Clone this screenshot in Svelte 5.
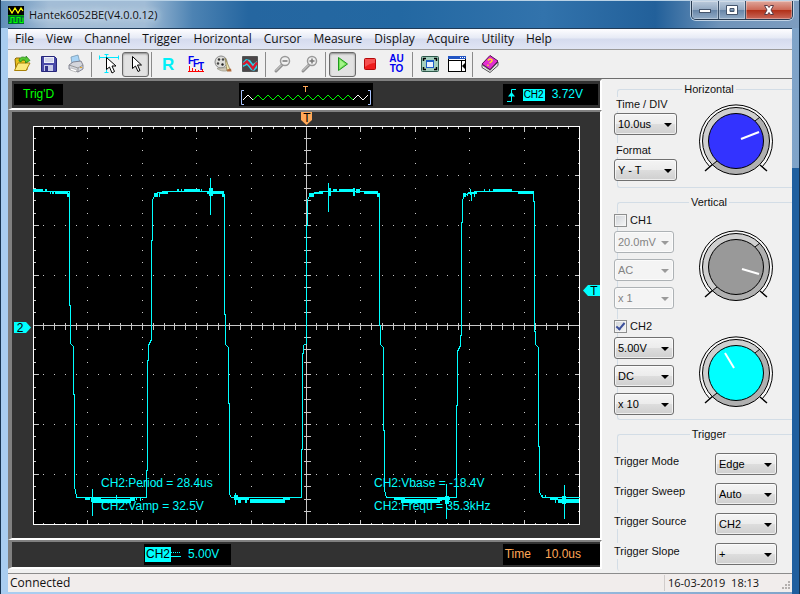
<script>
  // App.svelte — Hantek6052BE oscilloscope front panel

  // plot area is 10 x 8 divisions, origin at its top-left corner
  const W = 546;
  const H = 398;
  const DIV_X = W / 10;
  const DIV_Y = H / 8;
  const range = (n) => Array.from({ length: n }, (_, i) => i);

  // dotted graticule
  let dots = '';
  for (const c of range(9)) {
    for (const r of range(31)) {
      dots += `M${Math.floor((c + 1) * DIV_X)} ${Math.floor(((r + 1) * DIV_Y) / 4)}h1`;
    }
  }
  for (const r of range(7)) {
    for (const c of range(49)) {
      dots += `M${Math.floor(((c + 1) * DIV_X) / 5)} ${Math.floor((r + 1) * DIV_Y)}h1`;
    }
  }

  // ticks on the edges and on both centre axes
  let ticks = '';
  for (const i of range(49)) {
    const x = Math.floor(((i + 1) * DIV_X) / 5);
    const len = (i + 1) % 5 === 0 ? 5 : 2;
    ticks += `M${x} 0v${len}M${x} ${H}v${-len}M${x} 196v7`;
  }
  for (const i of range(31)) {
    const y = Math.floor(((i + 1) * DIV_Y) / 4);
    const len = (i + 1) % 4 === 0 ? 5 : 2;
    ticks += `M0 ${y}h${len}M${W} ${y}h${-len}M270 ${y}h7`;
  }

  const trace =
    'M0 65H36V179H37V217L40 220V268H41V360L43 370V371H113V344H114V234H115V219L118 213V114H119V74L121 69' +
    'L124 66L134 65H190L191 70V188H192V218L195 221V277H196V368L198 371H268V323H269V227H270V219L273 217V99H274V74' +
    'L276 69L282 66L290 65H344L346 70V199H347V218L350 221V304H351V364L353 371H423V279H424V225L427 219V209H428V96' +
    'H429V74L431 69L436 66L446 65H500V75H501V205H502V218L505 221V320H506V366L509 371H546';

  // noisy stretches: [x, y, width, height]
  const noise = [
    [0, 63, 10, 3], [12, 63, 2, 2], [17, 66, 1, 2], [19, 66, 2, 2], [22, 66, 13, 2], [34, 67, 3, 4],
    [121, 67, 4, 4], [126, 67, 1, 4], [127, 66, 8, 2], [144, 63, 2, 2], [148, 63, 1, 2], [151, 63, 16, 3],
    [168, 63, 1, 2], [174, 66, 16, 2], [176, 62, 4, 8], [189, 67, 2, 4],
    [52, 372, 5, 2], [58, 372, 10, 4], [60, 373, 38, 4], [97, 372, 5, 3], [103, 372, 1, 2], [107, 372, 1, 3],
    [201, 369, 4, 5], [205, 371, 3, 6], [208, 372, 8, 2], [212, 373, 2, 4], [217, 373, 35, 4], [250, 372, 7, 2],
    [276, 67, 5, 4], [282, 66, 8, 2], [295, 62, 3, 8], [300, 63, 4, 2], [306, 63, 16, 3], [320, 62, 2, 8],
    [323, 63, 4, 4], [331, 66, 13, 2], [344, 67, 3, 4],
    [361, 372, 10, 2], [368, 372, 4, 5], [371, 373, 36, 4], [404, 372, 5, 3], [407, 371, 10, 3], [412, 370, 4, 8],
    [430, 67, 3, 4], [434, 67, 1, 3], [436, 66, 8, 2], [441, 66, 1, 5], [451, 63, 1, 2], [456, 63, 1, 2],
    [460, 63, 19, 3], [485, 65, 15, 3],
    [509, 369, 1, 3], [512, 369, 1, 3], [517, 372, 8, 2], [522, 372, 1, 5], [525, 373, 21, 4], [529, 370, 4, 8],
  ];
  const spikes = 'M177 51V88M295 56V85M59 362V389M83 368V373M202 366V378M413 357V392M437 62V68M438 66V74M531 358V392';

  // little zigzag in the record preview
  const zigzag = (from, n) => range(n).map((i) => `${from + i * 5},${i % 2 ? 12 : 17}`).join(' ');

  const menu = ['File', 'View', 'Channel', 'Trigger', 'Horizontal', 'Cursor', 'Measure', 'Display', 'Acquire', 'Utility', 'Help'];

  const groups = [
    [['open', 'Open'], ['save', 'Save'], ['print', 'Print']],
    [['cross', 'Cross cursor'], ['pointer', 'No cursor']],
    [['ref', 'Reference'], ['fft', 'FFT'], ['filter', 'Digital filter'], ['passfail', 'Pass / Fail']],
    [['zoomout', 'Zoom out'], ['zoomin', 'Zoom in']],
    [['start', 'Start'], ['stop', 'Stop'], ['auto', 'Auto set']],
    [['full', 'Full screen'], ['panel', 'Side panel']],
    [['help', 'Help']],
  ];
  let cursorTool = $state('pointer');
  let running = $state(true);

  const isPressed = (id) => id === cursorTool || (id === 'start' && running);

  function press(id) {
    if (id === 'cross' || id === 'pointer') cursorTool = id;
    if (id === 'start') running = true;
    if (id === 'stop') running = false;
  }

  const channels = $state([
    {
      name: 'CH1', on: false, color: '#999999', hand: 'M6 2L23 7',
      fields: [['Volts', '20.0mV'], ['Coupling', 'AC'], ['Probe', 'x 1']],
    },
    {
      name: 'CH2', on: true, color: '#00ffff', hand: 'M-11 -20L-2 -5',
      fields: [['Volts', '5.00V'], ['Coupling', 'DC'], ['Probe', 'x 10']],
    },
  ]);

  const triggerRows = [['Mode', 'Edge'], ['Sweep', 'Auto'], ['Source', 'CH2'], ['Slope', '+']];
</script>

{#snippet combo(id, value, label, disabled)}
  <span class="combo" class:off={disabled}>
    <select {id} aria-label={label} {disabled}><option>{value}</option></select>
  </span>
{/snippet}

{#snippet knob(color, hand)}
  <svg class="knob" viewBox="-38 -38 76 76" aria-hidden="true">
    <path d="M-26 26A36.5 36.5 0 1 1 26 26" fill="#f8f8f8" stroke="#000" />
    <path d="M-31 30L-23 23M31 30L24 24" stroke="#000" stroke-width="1.4" />
    <circle r="33.5" fill="#cfcfcf" />
    <path d="M23.7 -23.7A33.5 33.5 0 0 1 -23.7 23.7Z" fill="#b0b0b0" />
    <circle r="33.5" fill="none" stroke="#000" />
    <path d="M19 -20L24 -24M-19 20L-24 24" stroke="#000" />
    <circle r="27.5" fill={color} stroke="#000" />
    <path d={hand} stroke="#fff" stroke-width="2" />
  </svg>
{/snippet}

{#snippet icon(id)}
  <svg class="icon" viewBox="0 0 20 20" aria-hidden="true">
    {#if id === 'open'}
      <path d="M3 5l1-1h4l1 2h6v10H4z" fill="#e8c11c" stroke="#8d6a06" />
      <path d="M2.5 16.5L6 9h12l-4 7.5z" fill="#fbe97c" stroke="#a98208" />
      <path d="M7 7c0-4 4-5 7-3V2l4 4.5L13.5 9V7c-2-2-4-1-4.5 1z" fill="#56c833" stroke="#1f7d14" stroke-width=".7" />
    {:else if id === 'save'}
      <path d="M2.5 2.5h13l2 2v13h-15z" fill="#4a4aa8" stroke="#26267a" />
      <rect x="5" y="3" width="10" height="6" fill="#eef0fa" />
      <path d="M6 5h8M6 7h8" stroke="#b5bad8" />
      <rect x="5" y="11" width="9" height="6" fill="#c9cce8" />
      <rect x="6" y="12" width="3" height="5" fill="#34348c" />
    {:else if id === 'print'}
      <path d="M5 3l7-2 2 8-8 1z" fill="#a9d4f5" stroke="#6c8fab" stroke-width=".7" />
      <path d="M3 11l4-3 8-1 2 4v4l-5 3-9-3z" fill="#d4d6dc" stroke="#6d7080" stroke-width=".8" />
      <path d="M3 11l9 3 5-3M12 14v4" fill="none" stroke="#888" stroke-width=".8" />
      <path d="M5 14l6 2-1 2-6-2z" fill="#fff" stroke="#999" stroke-width=".5" />
      <rect x="14" y="13" width="2" height="1" fill="#e5a92b" />
    {:else if id === 'cross'}
      <path d="M0 3.5h20M.5 1.5v4M19.5 1.5v4M7.5 0v19M5.5 .5h4M5.5 18.5h4" stroke="#00e8ff" />
      <path d="M7.5 3.5v12l3-2.5 2.5 6 2.5-1.5-2.5-5.5h4z" fill="#fff" stroke="#000" />
    {:else if id === 'pointer'}
      <path d="M6.5 2.5v12l3-2.5 2.5 5.5 2-1-2.5-5.5h4z" fill="#fff" stroke="#000" />
    {:else if id === 'ref'}
      <text class="letter" x="3" y="16">R</text>
    {:else if id === 'fft'}
      <path d="M2 17.5h16M3.5 17v-5M6.5 17v-3M9.5 17v-2M12.5 17v-1M16.5 17v-2" stroke="#f00" />
      <text class="fft" x="2 7 12" y="10 13 16">FFT</text>
    {:else if id === 'filter'}
      <circle cx="8" cy="8" r="6" fill="#dcdcd8" stroke="#888" />
      <circle cx="6" cy="5.5" r="1.2" fill="#333" />
      <circle cx="10" cy="5.5" r="1.2" fill="#444" />
      <circle cx="5" cy="9.5" r="1.2" fill="#444" />
      <circle cx="9.5" cy="10.5" r="1.2" fill="#222" />
      <path d="M4 14.5c4 3 8 3 11 2l-1-3z" fill="#cfc9ba" stroke="#887" stroke-width=".6" />
      <path d="M12 4l4 9 1 3-3 1z" fill="#efe6ae" stroke="#857a4a" stroke-width=".7" />
      <path d="M14 15.5l4-1 .5 3h-4z" fill="#b06a3c" />
    {:else if id === 'passfail'}
      <path d="M2.5 2.5h15v15h-15z" fill="#22d7ee" stroke="#555" />
      <path d="M3 3h14v4l-4 3-3-4-4-1-3 3zM3 17v-4l4-2 4 5 3 1 3-3v3z" fill="#4b4648" />
      <path d="M3 10.500l4-3 3 3 3 4 4-6" fill="none" stroke="#d31a30" stroke-width="2.5" />
    {:else if id === 'zoomout' || id === 'zoomin'}
      <path d="M9 11l-6 6" stroke="#8f8f8f" stroke-width="3" stroke-linecap="round" />
      <path d="M8.5 11l-5.5 5.5" stroke="#ddd" stroke-linecap="round" />
      <circle cx="12" cy="7" r="4.500" fill="#f0f0f0" stroke="#999" stroke-width="1.5" />
      <path d="M9.5 7h5" stroke="#777" stroke-width="1.5" />
      {#if id === 'zoomin'}<path d="M12 4.5v5" stroke="#777" stroke-width="1.5" />{/if}
    {:else if id === 'start'}
      <path d="M5.5 3.5v13L14.5 10z" fill="#74e257" stroke="#1f9a1f" />
      <path d="M7 6v8l5-4z" fill="#a6f48c" />
    {:else if id === 'stop'}
      <rect x="4.5" y="4.5" width="11" height="11" rx="1" fill="#ee1c1c" stroke="#b30808" />
      <path d="M5 5h10v4q-5 0-10 4z" fill="#f65050" />
    {:else if id === 'full'}
      <rect x="1.5" y="2.5" width="17" height="15" rx="1" fill="#a4cfbd" stroke="#2e5a4c" />
      <path d="M3.5 7V4.5H6M14 4.5h2.5V7M16.5 13v2.5H14M6 15.5H3.5V13" fill="none" stroke="#000" stroke-width="1.5" />
      <rect x="6.5" y="6.5" width="7" height="7" fill="#e8f1ff" stroke="#1b5cc7" />
      <rect x="6" y="6" width="8" height="2" fill="#1b5cc7" />
    {:else if id === 'panel'}
      <rect x="1.5" y="2.5" width="17" height="15" fill="#fff" stroke="#000" />
      <rect x="1" y="2" width="18" height="3" fill="#2356c4" />
      <path d="M13 3.5h1M15 3.5h1M17 3.5h1" stroke="#fff" />
      <path d="M1 6.5h18M14.5 6v11" stroke="#000" />
      <path d="M18 9v6l-3-3z" fill="#000" />
    {:else if id === 'help'}
      <path d="M2 10.5l8 5.5 8-8v3.5l-8 7-8-5z" fill="#fff" stroke="#222" stroke-width=".8" />
      <path d="M2 10l8-8.500L18 7l-8 8.500z" fill="#e22fd0" stroke="#5b0d55" />
      <path d="M3 12l7 5 8-7.5" fill="none" stroke="#888" stroke-width=".6" />
      <path d="M8 6.5c2-3 6-.5 3 1.5l-1.5 1M8.5 10.8l-1 .8" fill="none" stroke="#ffe21f" stroke-width="1.5" />
    {/if}
  </svg>
{/snippet}

<div class="window">
  <header class="titlebar">
    <svg class="logo" viewBox="0 0 16 18" aria-hidden="true">
      <rect width="16" height="18" fill="#000" />
      <rect y="9" width="16" height="9" fill="#063" />
      <path d="M1 2l3 5 3-5 3 5 3-5 2 3" fill="none" stroke="#ff0" stroke-width="1.3" />
      <path d="M1 16.5h2v-5h3v5h3v-5h3v5h3v-5" fill="none" stroke="#0f0" stroke-width="1.2" />
      <path d="M0 9.5h16" stroke="#0a0" />
    </svg>
    <span class="caption">Hantek6052BE(V4.0.0.12)</span>
    <div class="winbtns">
      <button aria-label="Minimize">
        <svg viewBox="0 0 14 12"><rect x="1.5" y="5.5" width="11" height="3" fill="#fff" stroke="#44546b" /></svg>
      </button>
      <button aria-label="Maximize">
        <svg viewBox="0 0 14 12"><path d="M1.5 1.5h11v9h-11zM5 4.5h4v3H5z" fill="#fff" fill-rule="evenodd" stroke="#44546b" /></svg>
      </button>
      <button class="close" aria-label="Close">
        <svg viewBox="0 0 14 12"><path d="M2.5 1.5h3L7 3.5l1.5-2h3L9 6l2.5 4.5h-3L7 8.5l-1.5 2h-3L5 6z" fill="#fff" stroke="#5a3a44" /></svg>
      </button>
    </div>
  </header>

  <div class="client">
    <nav class="menu">
      {#each menu as item}
        <button>{item}</button>
      {/each}
    </nav>

    <div class="toolbar">
      {#each groups as group}
        <div class="group">
          {#each group as [id, label]}
            <button class="tool" class:pressed={isPressed(id)} title={label} aria-label={label} onclick={() => press(id)}>
              {#if id === 'auto'}
                <span class="auto">AU<br />TO</span>
              {:else}
                {@render icon(id)}
              {/if}
            </button>
          {/each}
        </div>
      {/each}
    </div>

    <div class="body">
      <main class="scope">
        <section class="strip top">
          <span class="readout trigd">Trig'D</span>
          <svg class="preview" viewBox="0 0 134 23" aria-hidden="true">
            <rect width="134" height="23" fill="#000" />
            <polyline points={zigzag(4, 26)} fill="none" stroke="#fff" />
            <polyline points={zigzag(14, 21)} fill="none" stroke="#0f0" />
            <path d="M5 7.5H2.5v14H5M129 7.5h2.5v14H129" fill="none" stroke="#a9c4ff" />
            <path d="M64 3.5h5M66.5 3v6" stroke="#ffa858" />
          </svg>
          <span class="readout level">
            <svg class="edge" viewBox="0 0 9 16" aria-hidden="true">
              <path d="M0 14.5h4.5v-12H9" fill="none" stroke="#0ff" />
              <path d="M1 9.5h7L4.5 5z" fill="#0ff" />
            </svg>
            <span class="tag small">CH2</span>
            <span>3.72V</span>
          </span>
        </section>

        <section class="screen">
          <svg viewBox="-21 -14 588 426" role="img" aria-label="CH2 waveform">
            <rect width={W} height={H} fill="#000" />
            <g transform="translate(0 .5)" stroke="#c8c8c8" shape-rendering="crispEdges">
              <path d={dots} />
            </g>
            <g transform="translate(.5 .5)" fill="none" shape-rendering="crispEdges">
              <path d={ticks} stroke="#c8c8c8" />
              <path d="M0 199H{W}M273 0V{H}" stroke="#c8c8c8" />
              <rect width={W} height={H} stroke="#fff" />
              <path d={trace} stroke="#0ff" />
              <path d={spikes} stroke="#0ff" />
            </g>
            <g fill="#0ff" shape-rendering="crispEdges">
              {#each noise as [x, y, w, h]}
                <rect {x} {y} width={w} height={h} />
              {/each}
            </g>

            <text class="meas" x="68" y="361">CH2:Period = 28.4us</text>
            <text class="meas" x="68" y="384">CH2:Vamp = 32.5V</text>
            <text class="meas" x="341" y="361">CH2:Vbase = -18.4V</text>
            <text class="meas" x="341" y="384">CH2:Frequ = 35.3kHz</text>

            <!-- channel, trigger level and trigger position markers -->
            <path d="M-19 196h12l5 5.5-5 5.5h-12z" fill="#0ff" />
            <text class="mark" x="-13" y="206">2</text>
            <path d="M567 159h-12l-5 5.5 5 5.5h12z" fill="#0ff" />
            <text class="mark" x="561" y="169">T</text>
            <path d="M268-14h11v8l-5.5 5-5.5-5z" fill="#ffa858" />
            <text class="mark" x="274" y="-4">T</text>
          </svg>
        </section>

        <section class="strip bottom">
          <span class="readout volts">
            <span class="tag">CH2</span>
            <svg class="dc" viewBox="0 0 10 5" aria-hidden="true">
              <path d="M0 .5h10" stroke="#0ff" stroke-dasharray="1 1" />
              <path d="M0 4.5h10" stroke="#0ff" />
            </svg>
            <span>5.00V</span>
          </span>
          <span class="readout time"><span>Time</span><span>10.0us</span></span>
        </section>
      </main>

      <aside class="panel">
        <fieldset>
          <legend>Horizontal</legend>
          <div class="row">
            <div class="stack">
              <label for="timediv">Time / DIV</label>
              {@render combo('timediv', '10.0us')}
              <label for="format">Format</label>
              {@render combo('format', 'Y - T')}
            </div>
            {@render knob('#3333ff', 'M5 -2L23 -9')}
          </div>
        </fieldset>

        <fieldset class="vertical">
          <legend>Vertical</legend>
          {#each channels as ch}
            <div class="row">
              <div class="channel">
                <label class="check"><input type="checkbox" bind:checked={ch.on} />{ch.name}</label>
                {#each ch.fields as [field, value]}
                  {@render combo(`${ch.name}-${field}`, value, `${ch.name} ${field}`, !ch.on)}
                {/each}
              </div>
              {@render knob(ch.color, ch.hand)}
            </div>
          {/each}
        </fieldset>

        <fieldset class="trigger">
          <legend>Trigger</legend>
          {#each triggerRows as [name, value]}
            <div class="field">
              <label for="trigger-{name}">Trigger {name}</label>
              {@render combo(`trigger-${name}`, value)}
            </div>
          {/each}
        </fieldset>
      </aside>
    </div>

    <footer class="status">
      <span class="message">Connected</span>
      <span class="clock">16-03-2019&nbsp; 18:13</span>
      <svg class="grip" viewBox="0 0 12 12" aria-hidden="true">
        <path d="M8 2h2M5 5h2M8 5h2M2 8h2M5 8h2M8 8h2" stroke="#b4b0ae" stroke-width="2" />
      </svg>
    </footer>
  </div>
</div>

<style>
  :global(body) {
    margin: 0;
    background: #123a63;
  }

  .window {
    box-sizing: border-box;
    min-height: 100vh;
    display: flex;
    flex-direction: column;
    padding: 0 7px 3px;
    border: solid #16324f;
    border-width: 0 1px;
    background:
      linear-gradient(#1f5f9f, #1f5f9f) right 168px / 7px 100% no-repeat,
      linear-gradient(90deg, #a9cdf0 50%, #7fa3c8);
    font: 12px/16px 'Open Sans', 'Noto Sans', sans-serif;
    color: #111;
  }

  button {
    margin: 0;
    padding: 0;
    border: 0;
    background: none;
    font: inherit;
    color: inherit;
  }

  /* title bar */
  .titlebar {
    display: flex;
    align-items: center;
    gap: 5px;
    height: 28px;
    margin: 0 -7px;
    padding: 0 7px;
    box-sizing: border-box;
    border-top: 1px solid #b9d2e6;
    background: linear-gradient(90deg, #5f8db8 0%, #a3bdd6 6%, #a1bcd6 18%, #4d83b3 24%, #2566a0 31%, #2368a2 50%, #3273ac 68%, #22609a 82%, #6f93b9 90%, #7d9dc0 100%);
  }

  .logo {
    width: 16px;
    height: 18px;
  }

  .caption {
    flex: 1;
    font-size: 11px;
    text-shadow: 0 0 6px #dce9f5, 0 0 10px #dce9f5;
  }

  .winbtns {
    display: flex;
    align-self: flex-start;
    height: 18px;
    margin-right: -1px;
    border: 1px solid #26394f;
    border-top: 0;
    border-radius: 0 0 5px 5px;
    overflow: hidden;
    box-shadow: 0 0 0 1px #c0d2e4;
  }

  .winbtns button {
    display: flex;
    align-items: center;
    justify-content: center;
    width: 27px;
    border-right: 1px solid #3b5068;
    background: linear-gradient(#bccbdc, #93a9c2 48%, #6886a8 52%, #91abc6);
    box-shadow: inset 0 0 0 1px #ffffff55;
  }

  .winbtns .close {
    width: 46px;
    border-right: 0;
    background: linear-gradient(#dfa79c, #cd6a58 48%, #b23119 52%, #c9685a);
  }

  .winbtns svg {
    width: 14px;
    height: 12px;
  }

  .client {
    flex: 1;
    display: flex;
    flex-direction: column;
    border-top: 1px solid #203b58;
    background: #f0f0f0;
  }

  .menu {
    display: flex;
    gap: 12px;
    height: 20px;
    padding-left: 7px;
    background: linear-gradient(#fdfdff, #e6eaf5 45%, #d5dbee 50%, #e0e5f4);
  }

  /* toolbar */
  .toolbar {
    display: flex;
    align-items: center;
    height: 28px;
    border-top: 1px solid #9a9a9a;
    border-bottom: 1px solid #6e6e6e;
  }

  .group {
    display: flex;
  }

  .group + .group {
    padding-left: 3px;
    margin-left: 2px;
    border-left: 1px solid #8a8a8a;
  }

  .tool {
    box-sizing: border-box;
    display: flex;
    align-items: center;
    justify-content: center;
    width: 27px;
    height: 25px;
    border-radius: 3px;
  }

  .tool.pressed {
    border: 1px solid #6a6a6a;
    background: #e2e2e2;
    box-shadow: inset 0 1px 2px #8a8a8a;
  }

  .icon {
    width: 20px;
    height: 20px;
  }

  .letter {
    font: bold 17px 'Liberation Sans', sans-serif;
    fill: #00f0f8;
  }

  .fft {
    font: bold 10px 'Liberation Sans', sans-serif;
    fill: #0000f0;
  }

  .auto {
    font: bold 10px/10px 'Liberation Sans', sans-serif;
    color: #0000f0;
  }

  .body {
    flex: 1;
    display: flex;
  }

  /* scope display */
  .scope {
    flex: 1;
    min-width: 0;
    font: 12px/15px 'Liberation Sans', Arial, sans-serif;
  }

  .strip,
  .screen {
    border: solid #808080;
    border-width: 2px 2px 2px 4px;
    border-right-color: #fff;
    border-bottom-color: #fff;
    background: #323232;
  }

  .strip {
    display: flex;
    align-items: center;
    justify-content: space-between;
    height: 25px;
  }

  .top {
    display: grid;
    grid-template-columns: 1fr auto 1fr;
    height: 27px;
  }

  .screen svg {
    display: block;
    width: 100%;
    height: auto;
  }

  .meas {
    font-size: 12px;
    fill: #0ff;
  }

  .mark {
    font-size: 12px;
    text-anchor: middle;
    fill: #000;
  }

  .readout {
    box-sizing: border-box;
    display: flex;
    align-items: center;
    height: 21px;
    background: #000;
    color: #0ff;
  }

  .trigd {
    justify-self: start;
    margin-left: 2px;
    padding: 0 9px;
    color: #0f0;
  }

  .preview {
    width: 134px;
    height: 23px;
  }

  .level {
    justify-self: end;
    gap: 7px;
    margin-right: 2px;
    padding: 0 15px 0 4px;
  }

  .edge {
    width: 9px;
    height: 16px;
  }

  .tag {
    padding: 0 1px;
    background: #0ff;
    color: #000;
  }

  .tag.small {
    font-size: 10px;
    line-height: 12px;
  }

  .volts {
    margin-left: 132px;
    padding: 0 12px 0 1px;
  }

  .dc {
    width: 10px;
    height: 5px;
    margin-right: 7px;
  }

  .time {
    gap: 14px;
    padding: 0 19px 0 2px;
    color: #ffa858;
  }

  /* side panel */
  .panel {
    width: 190px;
    box-sizing: border-box;
    display: flex;
    flex-direction: column;
    gap: 7px;
    padding: 3px 0 0 15px;
    overflow: hidden;
    font: 11px/14px 'Liberation Sans', Arial, sans-serif;
  }

  fieldset {
    min-width: 0;
    margin: 0 -8px 0 0;
    padding: 1px 0 6px;
    border: 1px solid #d3dde6;
    border-right: 0;
    border-radius: 3px;
  }

  legend {
    margin: 0 auto;
    padding: 0 2px;
  }

  .row {
    display: flex;
    margin-left: -4px;
  }

  .stack {
    width: 63px;
    display: flex;
    flex-direction: column;
    gap: 2px;
    margin-right: 21px;
  }

  .stack label {
    background: #f0f0f0;
    padding-left: 2px;
  }

  .stack .combo + label {
    margin-top: 6px;
  }

  .vertical {
    padding: 4px 0;
  }

  .vertical .row + .row {
    margin-top: 10px;
  }

  .channel {
    width: 60px;
    display: flex;
    flex-direction: column;
    gap: 6px;
    margin-right: 24px;
  }

  .check {
    display: flex;
    align-items: center;
    gap: 3px;
    height: 14px;
    margin-bottom: -2px;
    background: #f0f0f0;
  }

  .check input {
    appearance: none;
    box-sizing: border-box;
    width: 13px;
    height: 13px;
    margin: 0;
    border: 1px solid #8e8f8f;
    background: linear-gradient(135deg, #cfd3d8, #f6f6f6);
    box-shadow: inset 0 0 0 1px #f4f4f4;
  }

  .check input:checked::after {
    content: '';
    display: block;
    width: 3px;
    height: 7px;
    margin: 0 0 0 3px;
    border: solid #3b4f9b;
    border-width: 0 2px 2px 0;
    transform: rotate(40deg);
  }

  .knob {
    flex: none;
    width: 76px;
    height: 76px;
    margin-top: 6px;
  }

  .channel + .knob {
    margin-top: 16px;
  }

  .combo {
    position: relative;
    display: block;
    height: 22px;
  }

  .combo::after {
    content: '';
    position: absolute;
    top: 10px;
    right: 5px;
    border: 4px solid transparent;
    border-top-color: #000;
    border-bottom: 0;
    pointer-events: none;
  }

  .combo select {
    appearance: none;
    box-sizing: border-box;
    width: 100%;
    height: 22px;
    margin: 0;
    padding: 0 0 0 3px;
    border: 1px solid #707070;
    border-radius: 3px;
    background: linear-gradient(#f4f4f4, #ececec 48%, #dddddd 52%, #cfcfcf);
    box-shadow: inset 0 0 0 1px #ffffffaa;
    font: inherit;
    color: #000;
  }

  .off::after {
    border-top-color: #9a9a9a;
  }

  .off select {
    border-color: #adb2b5;
    background: #f4f4f4;
    color: #838383;
    opacity: 1;
  }

  .trigger {
    flex: 1;
    padding-top: 12px;
    border-bottom: 0;
  }

  .field {
    display: flex;
    justify-content: space-between;
    align-items: flex-start;
    width: 163px;
    margin-left: -4px;
  }

  .field + .field {
    margin-top: 8px;
  }

  .field label {
    line-height: 16px;
    background: #f0f0f0;
  }

  .field .combo {
    width: 62px;
  }

  /* status bar */
  .status {
    display: flex;
    align-items: center;
    height: 18px;
    margin-top: 2px;
    border-top: 1px solid #8c8c8c;
    background: #f1edec;
  }

  .message {
    flex: 1;
    padding-left: 2px;
  }

  .clock {
    padding-left: 3px;
    width: 112px;
    border-left: 1px solid #d0cccb;
    font-size: 11px;
  }

  .grip {
    width: 12px;
    height: 12px;
    align-self: flex-end;
  }
</style>
